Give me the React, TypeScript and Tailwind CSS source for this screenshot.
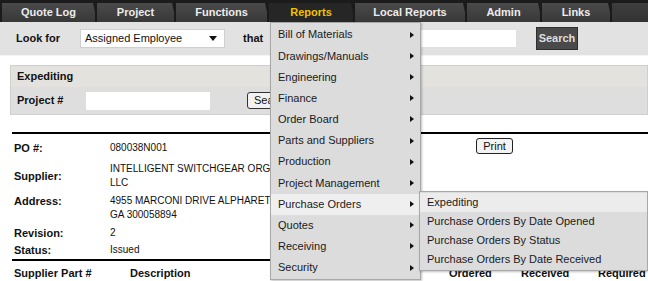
import React from 'react';

const tabs = [
    { label: 'Quote Log', w: 'w-[95px]' },
    { label: 'Project', w: 'w-[79px]' },
    { label: 'Functions', w: 'w-[93px]' },
    { label: 'Reports', w: 'w-[86px]', active: true },
    { label: 'Local Reports', w: 'w-[112px]' },
    { label: 'Admin', w: 'w-[75px]' },
    { label: 'Links', w: 'w-[70px]' },
];

const reportItems = [
    'Bill of Materials',
    'Drawings/Manuals',
    'Engineering',
    'Finance',
    'Order Board',
    'Parts and Suppliers',
    'Production',
    'Project Management',
    'Purchase Orders',
    'Quotes',
    'Receiving',
    'Security',
];

const poItems = [
    'Expediting',
    'Purchase Orders By Date Opened',
    'Purchase Orders By Status',
    'Purchase Orders By Date Received',
];

const Arrow = () => (
    <svg width="4" height="6" viewBox="0 0 4 6" className="shrink-0">
        <path d="M0 0 L4 3 L0 6 Z" fill="#111" />
    </svg>
);

const DetailRow = ({ label, lines, h, top }: { label: string; lines: string[]; h: string; top?: boolean }) => (
    <div className={`flex ${top ? 'items-start pt-[4px]' : 'items-center'} ${h}`}>
        <div className="w-[96px] font-bold text-[11px] leading-[14px] text-[#111]">{label}</div>
        <div className="text-[10px] leading-[14px] text-[#111] whitespace-nowrap">
            {lines.map(l => (
                <div key={l}>{l}</div>
            ))}
        </div>
    </div>
);

export default function App() {
    return (
        <div className="relative w-[648px] h-[281px] overflow-hidden bg-white font-['Liberation_Sans',Arial,sans-serif] text-[11px]">
            {/* Nav bar */}
            <div className="h-[22px] bg-[#1b1b1b] pt-[3px] flex pl-[2px]">
                {tabs.map(t => (
                    <div
                        key={t.label}
                        className={`${t.w} h-[19px] flex items-center justify-center font-bold text-[11px] border-r-[2px] border-[#1b1b1b] [clip-path:polygon(0_0,calc(100%-4px)_0,100%_100%,0_100%)] ${t.active ? 'bg-[#262626] text-[#f2c200]' : 'bg-gradient-to-b from-[#4a4a4a] to-[#383838] text-[#ececec]'}`}
                    >
                        {t.label}
                    </div>
                ))}
                <div className="flex-1 h-[19px] bg-gradient-to-b from-[#3e3e3e] to-[#333]" />
            </div>

            {/* Search bar */}
            <div className="h-[34px] bg-[#e2e2e2] border-b border-[#f4f4f4] flex items-center">
                <span className="ml-[16px] w-[46px] font-bold text-[11px] text-[#111]">Look for</span>
                <div className="ml-[18px] w-[145px] h-[19px] bg-white border border-[#d0d0d0] flex items-center justify-between px-[4px]">
                    <span className="text-[11px] text-[#111]">Assigned Employee</span>
                    <svg width="8" height="5" viewBox="0 0 8 5" className="mr-[3px]">
                        <path d="M0 0 L8 0 L4 5 Z" fill="#111" />
                    </svg>
                </div>
                <span className="ml-[18px] w-[24px] font-bold text-[11px] text-[#111]">that</span>
                <div className="ml-[23px] w-[227px] h-[19px] bg-white border border-[#e0e0e0]" />
                <div className="ml-[19px] h-[23px] w-[42px] bg-[#4a4a4a] border border-[#2e2e2e] flex items-center justify-center font-bold text-[11px] text-[#dedede]">
                    Search
                </div>
            </div>

            {/* Expediting panel */}
            <div className="mt-[9px] ml-[10px] border border-[#cfcfcf] bg-[#dedede]">
                <div className="h-[21px] bg-[#e4e2de] flex items-center pl-[6px] font-bold text-[11px] text-[#111]">
                    Expediting
                </div>
                <div className="h-[27px] flex items-center pl-[6px]">
                    <span className="w-[69px] font-bold text-[11px] text-[#111]">Project #</span>
                    <div className="w-[124px] h-[18px] bg-white" />
                    <div className="ml-[37px] h-[17px] px-[6px] bg-[#f2f2f2] border border-[#333] rounded-[3px] flex items-center text-[11px] text-[#111]">
                        Search
                    </div>
                </div>
            </div>

            {/* PO details */}
            <div className="mt-[17px] ml-[12px] border-t-[2px] border-black">
                <div className="relative pl-[2px]">
                    <div className="absolute left-[464px] top-[4px] h-[16px] w-[37px] bg-[#f3f3f3] border border-[#222] rounded-[3px] flex items-center justify-center text-[11px] text-[#111]">
                        Print
                    </div>
                    <DetailRow label="PO #:" lines={['080038N001']} h="h-[28px]" />
                    <DetailRow label="Supplier:" lines={['INTELLIGENT SWITCHGEAR ORGANIZATION', 'LLC']} h="h-[28px]" />
                    <DetailRow label="Address:" lines={['4955 MARCONI DRIVE ALPHARETTA', 'GA  300058894']} h="h-[35px]" top />
                    <DetailRow label="Revision:" lines={['2']} h="h-[16px]" />
                    <DetailRow label="Status:" lines={['Issued']} h="h-[18px]" />
                </div>
                <div className="border-t-[2px] border-black h-[26px] flex items-center pl-[2px] font-bold text-[11px] text-[#111]">
                    <span className="w-[116px]">Supplier Part #</span>
                    <span className="w-[319px]">Description</span>
                    <span className="w-[72px]">Ordered</span>
                    <span className="w-[77px]">Received</span>
                    <span>Required</span>
                </div>
            </div>

            {/* Reports dropdown */}
            <div className="absolute left-[270px] top-[22px] w-[151px] bg-[#dcdcdc] border border-[#a8a8a8] shadow-[1px_1px_2px_rgba(0,0,0,0.25)] py-[1px]">
                {reportItems.map(item => (
                    <div
                        key={item}
                        className={`h-[21.2px] flex items-center justify-between pl-[7px] pr-[6px] text-[11px] text-[#1a1a1a] ${item === 'Purchase Orders' ? 'bg-[#efefef]' : ''}`}
                    >
                        <span>{item}</span>
                        <Arrow />
                    </div>
                ))}
            </div>

            {/* Purchase Orders submenu */}
            <div className="absolute left-[419px] top-[191px] w-[229px] bg-[#dcdcdc] border border-[#a8a8a8] shadow-[1px_1px_2px_rgba(0,0,0,0.25)] py-[1px]">
                {poItems.map(item => (
                    <div
                        key={item}
                        className={`h-[19px] flex items-center pl-[7px] text-[11px] text-[#1a1a1a] ${item === 'Expediting' ? 'bg-[#ececec]' : ''}`}
                    >
                        {item}
                    </div>
                ))}
            </div>
        </div>
    );
}
